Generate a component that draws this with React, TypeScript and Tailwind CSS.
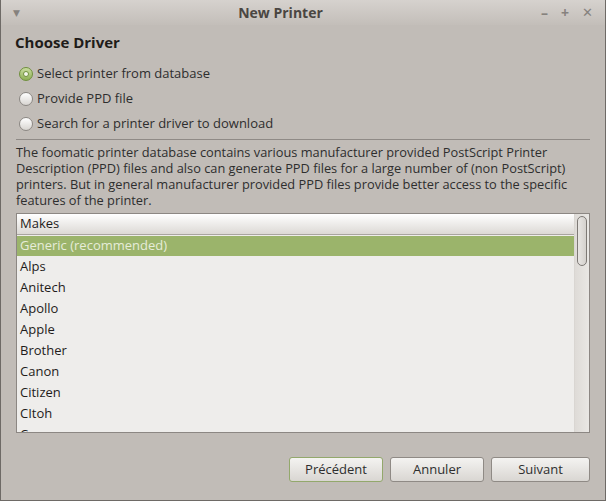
import React from 'react';

const makes = ['Alps', 'Anitech', 'Apollo', 'Apple', 'Brother', 'Canon', 'Citizen', 'CItoh', 'Compaq'];

const options = [
  { label: 'Select printer from database', checked: true },
  { label: 'Provide PPD file', checked: false },
  { label: 'Search for a printer driver to download', checked: false },
];

const Radio: React.FC<{ checked: boolean }> = ({ checked }) => (
  <span
    className={
      'flex h-[14px] w-[14px] items-center justify-center rounded-full border ' +
      (checked
        ? 'border-[#6f8f3c] bg-gradient-to-b from-[#c9dca0] to-[#8fb055]'
        : 'border-[#8c8884] bg-gradient-to-b from-[#ffffff] to-[#d8d5d1]')
    }
  >
    {checked && <span className="h-[6px] w-[6px] rounded-full border border-[#6f8f3c] bg-[#f4f7ec]" />}
  </span>
);

const Button: React.FC<{ label: string; focused?: boolean; wide?: boolean }> = ({ label, focused, wide }) => (
  <button
    className={
      'h-[25px] rounded-[3px] border bg-gradient-to-b from-[#f4f3f1] to-[#d9d6d2] text-[13px] text-[#2e2e2e] ' +
      (focused ? 'border-[#93a86c] ' : 'border-[#8f8a85] ') +
      (wide ? 'w-[99px]' : 'w-[94px]')
    }
  >
    {label}
  </button>
);

export default function App() {
  return (
    <div
      className="flex h-[501px] w-[606px] flex-col overflow-hidden border-x border-b border-[#6e6a66] bg-[#c1bcb7] text-[#2e2e2e]"
      style={{ fontFamily: '"Open Sans", "DejaVu Sans", sans-serif' }}
    >
      {/* title bar */}
      <div className="flex h-[25px] shrink-0 items-center bg-gradient-to-b from-[#d6d2ce] to-[#c3beb9] px-[12px] text-[#86827e]">
        <span className="text-[9px]">▼</span>
        <div className="flex-1 text-center text-[14px] font-bold text-[#4a4642]">New Printer</div>
        <div className="flex items-center gap-[13px] text-[14px] font-bold">
          <span>–</span>
          <span>+</span>
          <span className="text-[13px]">✕</span>
        </div>
      </div>

      <div className="flex flex-1 flex-col px-[15px]">
        <h1 className="-ml-px mt-[7px] text-[15px] font-bold leading-[20px] text-[#1f1c1a]">Choose Driver</h1>

        <div className="mt-[13px] flex flex-col gap-[7px] pl-[3px]">
          {options.map((o) => (
            <label key={o.label} className="flex h-[18px] items-center gap-[4px] text-[13px]">
              <Radio checked={o.checked} />
              <span>{o.label}</span>
            </label>
          ))}
        </div>

        <div className="mt-[6px] h-px bg-[#8f8a86]" />

        <p className="mt-[4px] whitespace-nowrap text-[12.8px] leading-[16px]">
          The foomatic printer database contains various manufacturer provided PostScript Printer
          <br />
          Description (PPD) files and also can generate PPD files for a large number of (non PostScript)
          <br />
          printers. But in general manufacturer provided PPD files provide better access to the specific
          <br />
          features of the printer.
        </p>

        {/* makes list */}
        <div className="mt-[5px] flex h-[220px] overflow-hidden border border-[#8c8783] bg-[#eeedeb]">
          <div className="flex flex-1 flex-col overflow-hidden">
            <div className="flex h-[21px] shrink-0 items-center border-b border-[#a9a5a0] bg-gradient-to-b from-[#ffffff] to-[#dcd9d5] px-[3px] text-[13px] text-[#1f1c1a]">
              Makes
            </div>
            <div className="mt-px flex h-[20px] shrink-0 items-center bg-[#9bb46b] px-[3px] text-[13px] text-[#e6ecd9]">
              Generic (recommended)
            </div>
            {makes.map((m) => (
              <div key={m} className="flex h-[21px] shrink-0 items-center px-[3px] text-[13px] text-[#1f1c1a]">
                {m}
              </div>
            ))}
          </div>
          <div className="w-[15px] shrink-0 border-l border-[#d9d6d2] bg-gradient-to-r from-[#dedbd7] to-[#e9e7e4] px-[2px] pt-[2px]">
            <div className="h-[50px] rounded-full border border-[#7d7975] bg-gradient-to-r from-[#e8e6e3] to-[#d4d1cd]" />
          </div>
        </div>

        <div className="mt-[24px] flex justify-end gap-[7px]">
          <Button label="Précédent" focused />
          <Button label="Annuler" />
          <Button label="Suivant" wide />
        </div>
      </div>
    </div>
  );
}
